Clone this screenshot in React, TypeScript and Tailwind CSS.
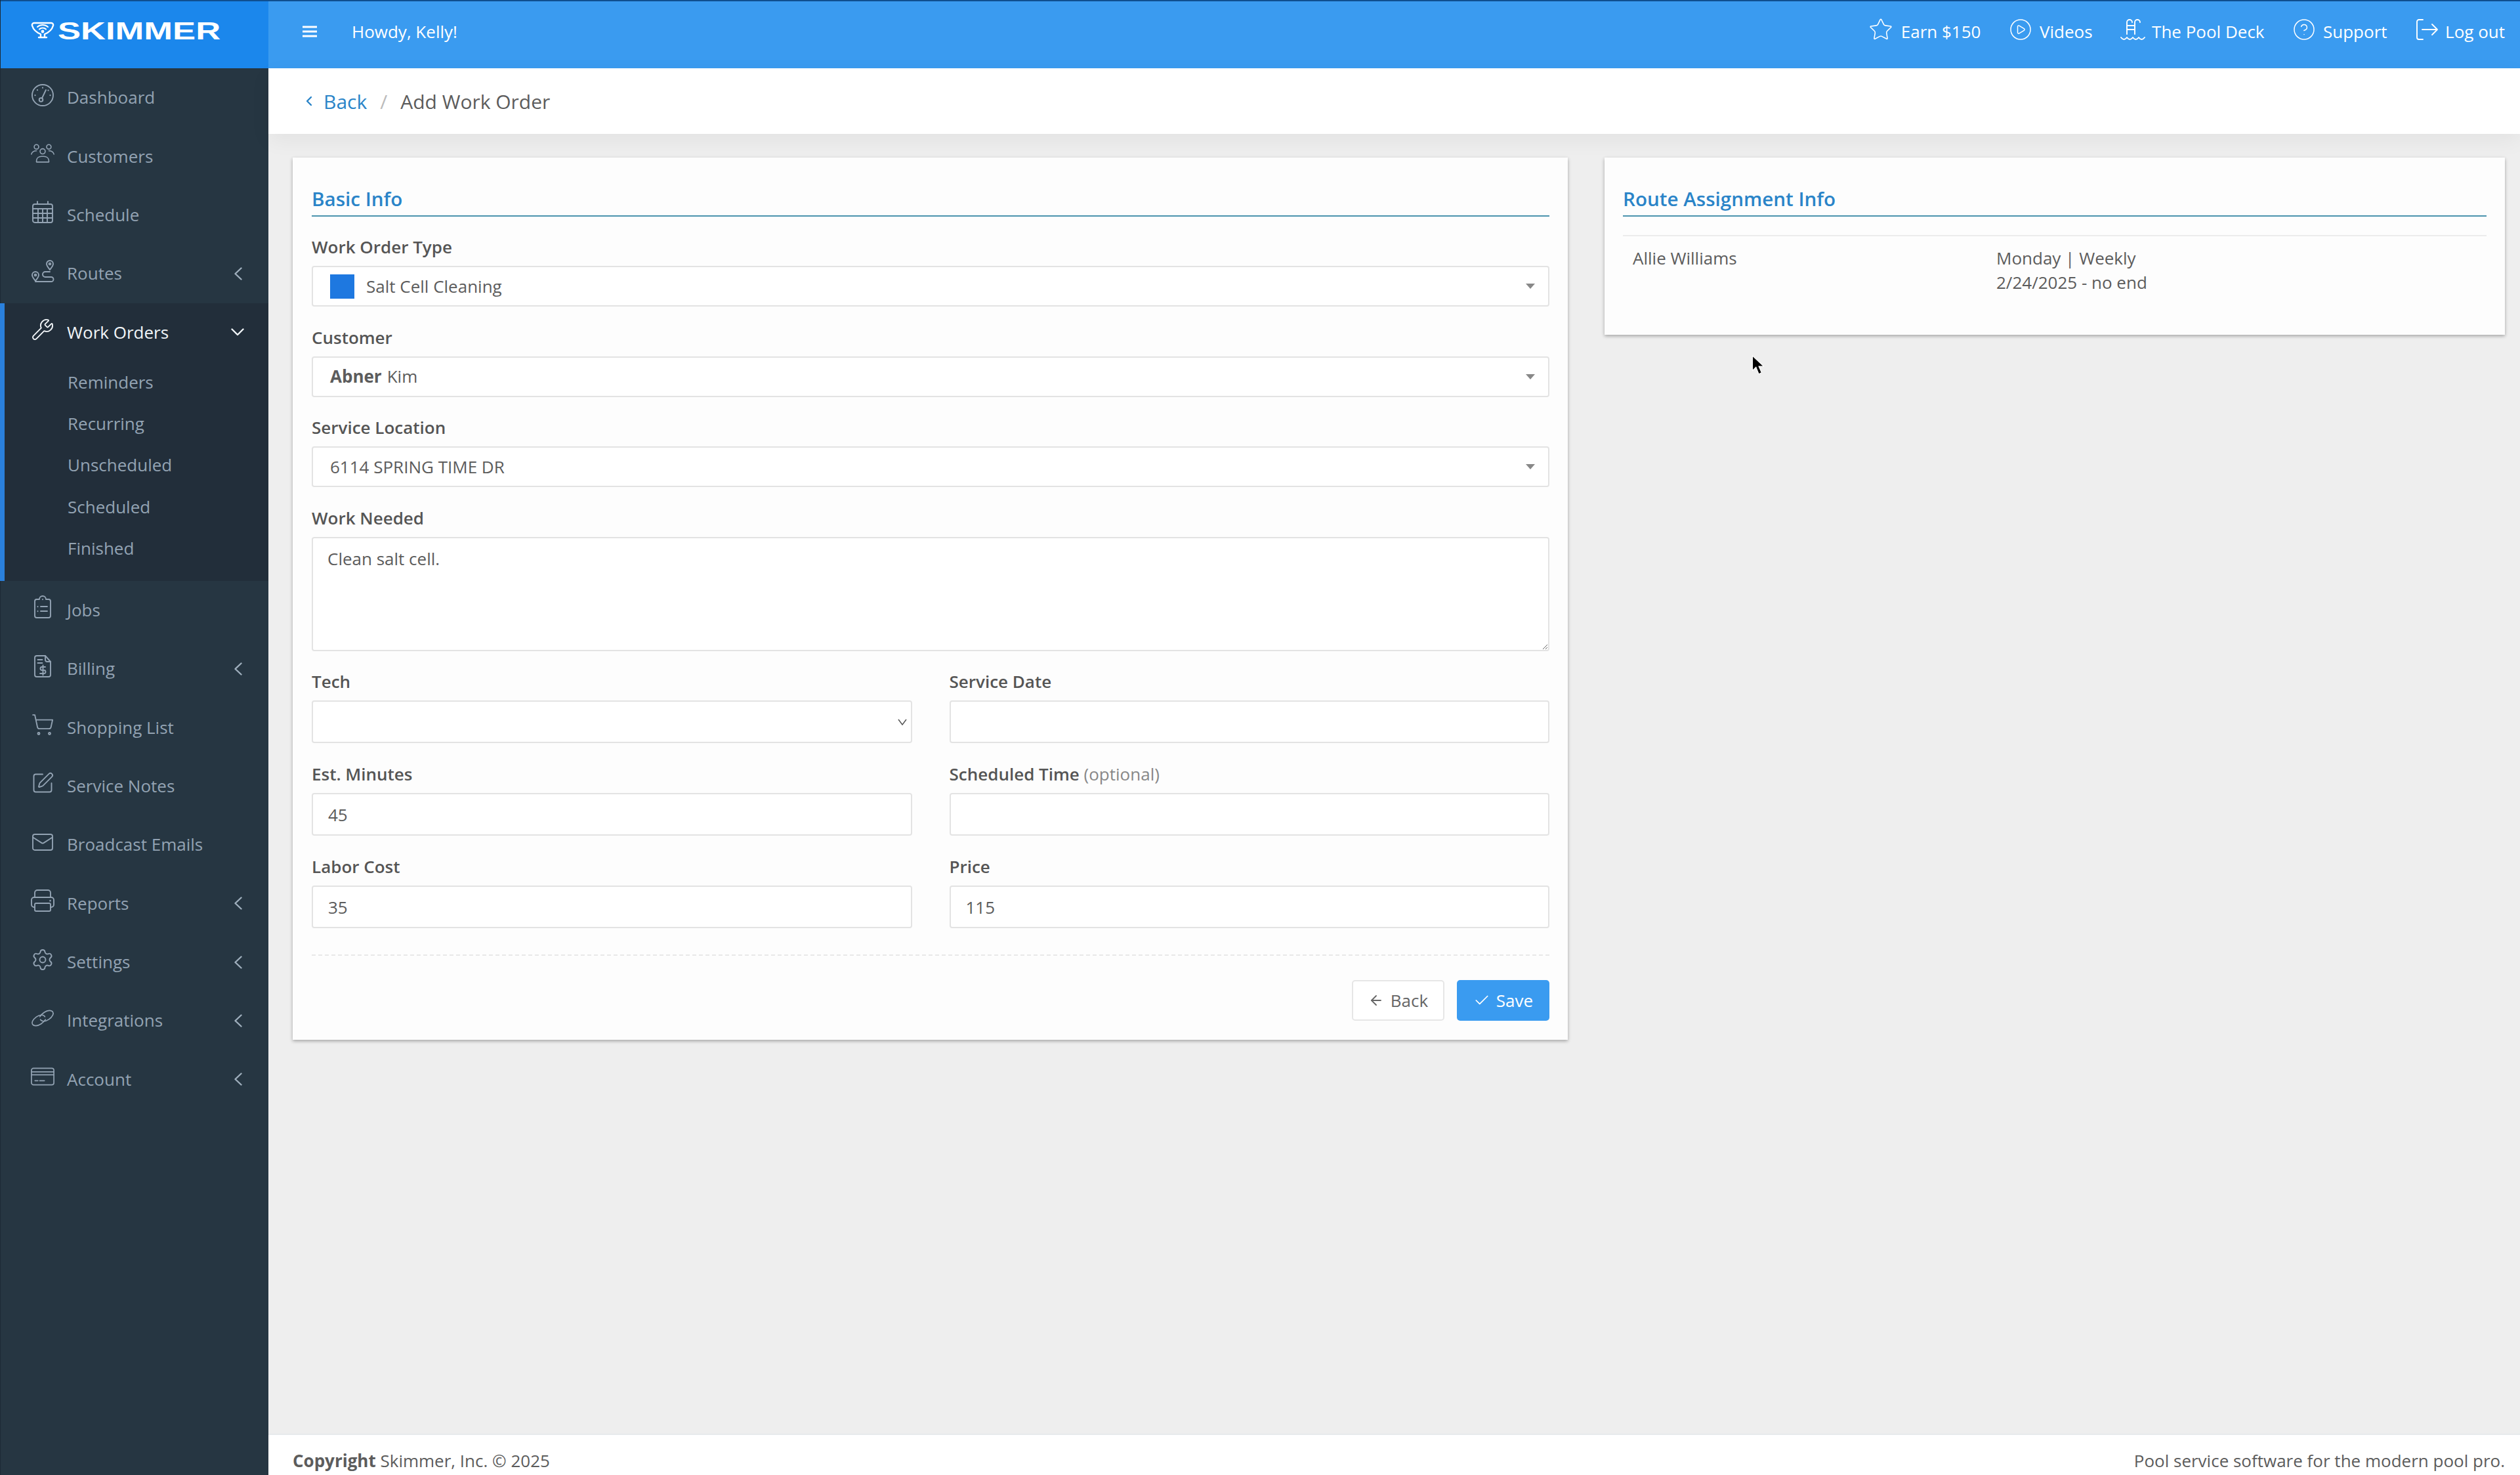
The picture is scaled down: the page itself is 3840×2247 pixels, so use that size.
import React from "react";
import { Wrench, ShoppingCart, SquarePen, Mail, Settings, Star, CirclePlay, CircleHelp, ArrowLeft, Check } from "lucide-react";

const S = ({ children, w = 36, h = 36, cls = "" }: { children: React.ReactNode; w?: number; h?: number; cls?: string }) => (
  <svg width={w} height={h} viewBox={`0 0 ${w} ${h}`} fill="none" stroke="currentColor" strokeWidth="1.9" strokeLinecap="round" strokeLinejoin="round" className={cls}>
    {children}
  </svg>
);

const Gauge = () => (
  <S>
    <circle cx="18" cy="18" r="16" />
    <circle cx="15.5" cy="25" r="2.8" />
    <path d="M17 22.5 23 10" />
    <path d="M18 6.5v.2M10 10v.2M6.5 18v.2M29.5 18v.2M26.5 10.5v.2" strokeWidth="2.2" />
  </S>
);
const Users = () => (
  <S w={42} h={36}>
    <circle cx="10" cy="6" r="4" />
    <circle cx="32" cy="6" r="4" />
    <circle cx="21" cy="14" r="4.6" />
    <path d="M1 19c1-4 4-6 9-6M41 19c-1-4-4-6-9-6" />
    <path d="M10 33v-2c0-5 4-8 9-8h4c5 0 9 3 9 8v2z" />
  </S>
);
const Cal = () => (
  <S>
    <rect x="3" y="6" width="30" height="28" rx="3" />
    <path d="M3 13h30M3 20h30M3 27h30M11 13v21M18 13v21M25 13v21M10 2v4M26 2v4" />
  </S>
);
const RouteI = () => (
  <S>
    <path d="M29 16c-3-4-5-6-5-9a5 5 0 0 1 10 0c0 3-2 5-5 9z" />
    <circle cx="29" cy="7" r="1.4" />
    <path d="M7 33c-3-4-5-6-5-9a5 5 0 0 1 10 0c0 3-2 5-5 9z" />
    <circle cx="7" cy="24" r="1.4" />
    <path d="M29 19h-7a4 4 0 0 0 0 8h9a3.5 3.5 0 0 1 0 7H7" />
  </S>
);
const Clip = () => (
  <S>
    <path d="M13 6H9a3 3 0 0 0-3 3v22a3 3 0 0 0 3 3h18a3 3 0 0 0 3-3V9a3 3 0 0 0-3-3h-4a5 5 0 0 0-10 0z" />
    <path d="M15 17h10M15 24h10M10.500 17v.2M10.500 24v.2M18 6v.2" />
  </S>
);
const Bill = () => (
  <S>
    <path d="M22 2H9a3 3 0 0 0-3 3v26a3 3 0 0 0 3 3h18a3 3 0 0 0 3-3V11z" />
    <path d="M22 2v6a3 3 0 0 0 3 3h5" />
    <path d="M10.500 8h7M10.500 13h7" />
    <path d="M22 19h-5a2.500 2.500 0 0 0 0 5h3a2.500 2.500 0 0 1 0 5h-6M18.500 16.500v15" />
  </S>
);
const Printer = () => (
  <S>
    <path d="M6 13V6a4 4 0 0 1 4-4h16a4 4 0 0 1 4 4v7" />
    <path d="M6 28H5a4 4 0 0 1-4-4v-7a4 4 0 0 1 4-4h26a4 4 0 0 1 4 4v7a4 4 0 0 1-4 4h-1" />
    <rect x="6" y="22" width="24" height="12" rx="2" />
    <path d="M29.500 18v.2" strokeWidth="2.4" />
  </S>
);
const LinkI = () => (
  <S w={42} h={30}>
    <path d="M16 12.500C20 6.500 27 1.500 33 1.500c6 0 8 4 6 8-3 6-10 11-16 11-3 0-5-1-6-3" />
    <path d="M26 17.500c-4 6-11 11-17 11-6 0-8-4-6-8 3-6 10-11 16-11 3 0 5 1 6 3" />
  </S>
);
const Card = () => (
  <S w={40} h={30}>
    <rect x="1" y="1" width="38" height="28" rx="3.500" />
    <path d="M1 7h38M1 12h38M7 22h5M15 22h8" />
  </S>
);
const Pool = () => (
  <S w={38} h={36}>
    <path d="M10 25V7a4 4 0 0 1 8 0M22 25V7a4 4 0 0 1 8 0M10 12h12M10 18h12" />
    <path d="M1 30c3 4 6 4 9 0 3 4 6 4 9 0 3 4 6 4 9 0 3 4 6 4 9 0" />
  </S>
);
const Logout = () => (
  <S>
    <path d="M12 3H6a3 3 0 0 0-3 3v24a3 3 0 0 0 3 3h6" />
    <path d="M11 18h23M26 10l8 8-8 8" />
  </S>
);
const L = (I: any, size = 36) => () => <I size={size} strokeWidth={1.25} />;

const ChevL = () => (
  <svg width="12" height="20" viewBox="0 0 12 20" fill="none" stroke="#9fafbd" strokeWidth="2.4" strokeLinecap="round" strokeLinejoin="round">
    <path d="M10.500 1.500 1.500 10l9 8.500" />
  </svg>
);

type Row = { t: string; I: () => React.ReactElement; chev?: boolean };

const rows: Row[] = [
  { t: "Dashboard", I: Gauge },
  { t: "Customers", I: Users },
  { t: "Schedule", I: Cal },
  { t: "Routes", I: RouteI, chev: true },
];
const rows2: Row[] = [
  { t: "Jobs", I: Clip },
  { t: "Billing", I: Bill, chev: true },
  { t: "Shopping List", I: L(ShoppingCart, 40) },
  { t: "Service Notes", I: L(SquarePen) },
  { t: "Broadcast Emails", I: L(Mail, 38) },
  { t: "Reports", I: Printer, chev: true },
  { t: "Settings", I: L(Settings), chev: true },
  { t: "Integrations", I: LinkI, chev: true },
  { t: "Account", I: Card, chev: true },
];

const NavRow = ({ t, I, chev }: Row) => (
  <div className="flex h-[89.4px] items-center pl-[46px] pr-[40px]">
    <span className="flex w-[36px] -mt-2 items-center justify-center"><I /></span>
    <span className="ml-[19px] flex-1">{t}</span>
    {chev && <ChevL />}
  </div>
);

const Label = ({ children }: { children: React.ReactNode }) => (
  <label className="mb-[12px] block text-[26px] font-semibold leading-[34px] text-[#555]">{children}</label>
);

const Caret = () => <span className="h-0 w-0 border-x-[7px] border-t-[8px] border-x-transparent border-t-[#888]" />;

const Sel = ({ children }: { children: React.ReactNode }) => (
  <div className="mb-[29.5px] flex h-[62px] items-center justify-between rounded-[4px] border-2 border-[#e3e3e3] bg-white pl-[26px] pr-[20px] text-[26px] text-[#5c5c5c]">
    <span className="flex items-center">{children}</span>
    <Caret />
  </div>
);

const Field = ({ label, value }: { label: React.ReactNode; value?: string }) => (
  <div>
    <Label>{label}</Label>
    <input readOnly defaultValue={value} className="block h-[65px] w-full rounded-[4px] border-2 border-[#e3e3e3] bg-white px-[23px] text-[26px] text-[#5c5c5c] outline-none" />
  </div>
);

const Title = ({ children }: { children: React.ReactNode }) => (
  <h2 className="border-b-2 border-[#4b93ad] pb-[6px] text-[29.6px] font-semibold leading-[38px] text-[#2a84c8]">{children}</h2>
);

export default function App() {
  return (
    <div className="relative flex h-screen w-full overflow-hidden bg-[#eeeeee] font-['Open_Sans',sans-serif] text-[26px] text-[#5c5c5c]">
      <aside className="flex h-full w-[409px] shrink-0 flex-col border-l border-[#1c2a35] bg-[#263642] text-[#93a3b3]">
        <div className="flex h-[104px] shrink-0 items-start border-t-2 border-[#0f4f8f] bg-[#1b87ec] pl-[46px] pt-[31px] text-white">
          <svg width="36" height="28" viewBox="0 0 36 28" fill="none" stroke="currentColor" strokeWidth="2.4" strokeLinejoin="round" strokeLinecap="round">
            <path d="M5 2h26a3 3 0 0 1 3 4c-2 7-8 11-13 13v5h3M15 24h6M5 2a3 3 0 0 0-3 4c2 7 8 11 13 13v5h-3" />
            <path d="M10 8a12 12 0 0 1 16 0M13 11.500a7 7 0 0 1 10 0" strokeWidth="2" />
            <circle cx="18" cy="15" r="1.2" fill="currentColor" />
          </svg>
          <span className="ml-[5px] -mt-[4px] inline-block origin-left scale-x-[1.42] font-['Liberation_Sans',sans-serif] text-[37px] font-bold leading-[37px]">SKIMMER</span>
        </div>
        <nav className="flex flex-col">
          {rows.map((r) => <NavRow key={r.t} {...r} />)}
          <div className="-ml-px h-[423px] border-l-[7px] border-[#2a80dc] bg-[#222e3a]">
            <div className="-ml-[6px] flex h-[89.4px] items-center pl-[46px] pr-[37px] text-[#f1f5f8]">
              <span className="flex w-[36px] -mt-2 items-center justify-center"><Wrench size={36} strokeWidth={1.25} /></span>
              <span className="ml-[19px] flex-1">Work Orders</span>
              <svg width="20" height="12" viewBox="0 0 20 12" fill="none" stroke="currentColor" strokeWidth="2.4" strokeLinecap="round" strokeLinejoin="round">
                <path d="M1.500 1.500 10 10l8.500-8.500" />
              </svg>
            </div>
            {["Reminders", "Recurring", "Unscheduled", "Scheduled", "Finished"].map((t) => (
              <div key={t} className="flex h-[63.2px] items-center pl-[96px]">{t}</div>
            ))}
          </div>
          {rows2.map((r) => <NavRow key={r.t} {...r} />)}
        </nav>
      </aside>

      <div className="flex min-w-0 flex-1 flex-col">
        <header className="flex h-[104px] shrink-0 items-start justify-between border-t-2 border-[#0f4f8f] bg-[#3a9bf0] pr-[23px] pt-[28px] text-white">
          <div className="flex items-center pl-[52px]">
            <svg width="22" height="20" viewBox="0 0 22 20" stroke="currentColor" strokeWidth="3"><path d="M0 3h22M0 10h22M0 17h22" /></svg>
            <span className="ml-[53px] leading-[36px]">Howdy, Kelly!</span>
          </div>
          <div className="flex items-center gap-[42.5px] leading-[36px]">
            <span className="flex items-center gap-[12px]"><Star size={38} strokeWidth={1} className="-mt-[6px]" />Earn $150</span>
            <span className="flex items-center gap-[11px]"><CirclePlay size={36} strokeWidth={1} className="-mt-[6px]" />Videos</span>
            <span className="flex items-center gap-[10px]"><span className="-mt-[6px]"><Pool /></span>The Pool Deck</span>
            <span className="flex items-center gap-[11px]"><CircleHelp size={36} strokeWidth={1} className="-mt-[6px]" />Support</span>
            <span className="flex items-center gap-[10px]"><span className="-mt-[6px]"><Logout /></span>Log out</span>
          </div>
        </header>

        <div className="z-10 flex h-[100px] shrink-0 items-center bg-white pl-[57px] text-[30px] shadow-[0_10px_30px_rgba(0,0,0,0.05)]">
          <svg width="10" height="16" viewBox="0 0 10 16" fill="none" stroke="#2a84c8" strokeWidth="2.4" strokeLinecap="round" strokeLinejoin="round"><path d="M8 2 2 8l6 6" /></svg>
          <span className="ml-[17px] text-[#2a84c8]">Back</span>
          <span className="mx-[20px] text-[#bbb]">/</span>
          <span className="text-[#5c5c5c]">Add Work Order</span>
        </div>

        <main className="grid flex-1 grid-cols-[1943px_1372px] items-start gap-[56px] pl-[37px] pt-[36px]">
          <section className="bg-[#fdfdfd] pb-[29px] pl-[29px] pr-[28px] pt-[44px] shadow-[0_2px_5px_rgba(0,0,0,0.32)]">
            <Title>Basic Info</Title>
            <div className="mt-[29px]">
              <Label>Work Order Type</Label>
              <Sel>
                <span className="mr-[18px] h-[37px] w-[37px] bg-[#1e78e0]" />
                Salt Cell Cleaning
              </Sel>
              <Label>Customer</Label>
              <Sel><b className="mr-[8px] font-bold">Abner</b> Kim</Sel>
              <Label>Service Location</Label>
              <Sel>6114 SPRING TIME DR</Sel>
              <Label>Work Needed</Label>
              <textarea readOnly defaultValue="Clean salt cell." className="mb-[29.5px] block h-[174px] w-full rounded-[4px] border-2 border-[#e3e3e3] bg-white px-[22px] py-[12px] text-[26px] text-[#5c5c5c] outline-none" />
            </div>
            <div className="grid grid-cols-2 gap-x-[57px] gap-y-[30px]">
              <div>
                <Label>Tech</Label>
                <div className="flex h-[65px] items-center justify-end rounded-[4px] border-2 border-[#e3e3e3] bg-white pr-[6px]">
                  <svg width="14" height="10" viewBox="0 0 14 10" fill="none" stroke="#555" strokeWidth="1.500"><path d="M1 1l6 8 6-8" /></svg>
                </div>
              </div>
              <Field label="Service Date" />
              <Field label="Est. Minutes" value="45" />
              <Field label={<>Scheduled Time <span className="font-normal text-[#888]">(optional)</span></>} />
              <Field label="Labor Cost" value="35" />
              <Field label="Price" value="115" />
            </div>
            <div className="mt-[40px] border-t-2 border-dashed border-[#e8e8e8]" />
            <div className="mt-[37px] flex justify-end gap-[19px]">
              <button className="flex h-[62px] w-[141px] items-center justify-center gap-[10px] rounded-[5px] border-2 border-[#e6e6e6] bg-white text-[#666]">
                <ArrowLeft size={24} strokeWidth={1.8} />Back
              </button>
              <button className="flex h-[62px] w-[141px] items-center justify-center gap-[9px] rounded-[5px] bg-[#3a9bf0] text-white">
                <Check size={26} strokeWidth={1.6} />Save
              </button>
            </div>
          </section>

          <section className="h-[270px] bg-[#fdfdfd] px-[28px] pt-[44px] shadow-[0_2px_5px_rgba(0,0,0,0.32)]">
            <Title>Route Assignment Info</Title>
            <div className="mt-[28px] grid grid-cols-[554px_1fr] border-t-2 border-[#ececec] pl-[15px] pt-[15px] leading-[37px]">
              <div>Allie Williams</div>
              <div>Monday | Weekly<br />2/24/2025 - no end</div>
            </div>
          </section>
        </main>

        <footer className="flex h-[63px] shrink-0 items-start justify-between border-t-2 border-[#e7eaec] bg-white pl-[37px] pr-[23px] pt-[21px] leading-[36px]">
          <span><b className="font-bold">Copyright</b> Skimmer, Inc. © 2025</span>
          <span>Pool service software for the modern pool pro.</span>
        </footer>
      </div>

      <svg className="absolute left-[2668px] top-[541px]" width="22" height="32" viewBox="0 0 20 30">
        <path d="M2 1v21l5-5 4 10 4-2-4-9h7z" fill="#000" stroke="#fff" strokeWidth="1" />
      </svg>
    </div>
  );
}
